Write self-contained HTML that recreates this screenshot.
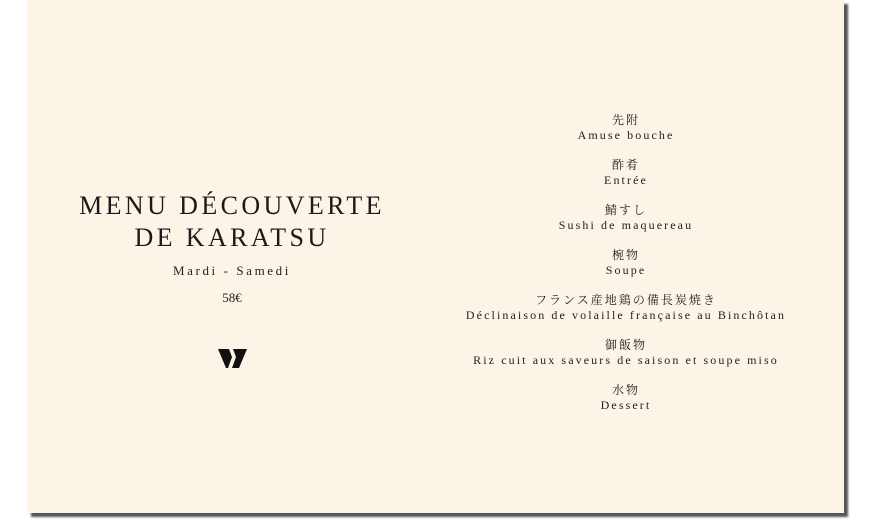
<!DOCTYPE html>
<html><head><meta charset="utf-8"><style>
html,body{margin:0;padding:0;background:#fff;width:880px;height:521px;overflow:hidden}
.card{position:absolute;left:27px;top:0;width:817px;height:513px;background:#fdf4e8;box-shadow:4px 4px 2px #555}
.f{font-family:"Liberation Serif","Noto Serif CJK SC",serif;color:#222;position:absolute;text-align:center;white-space:nowrap}
.t{left:0;width:410px;font-size:26px;letter-spacing:3.4px;line-height:32px;top:190px;color:#1a1a1a}
.s{left:0;width:410px;font-size:13px;letter-spacing:2.6px;top:263px}
.p{left:0;width:410px;font-size:13px;top:290px}
.r{left:400px;width:398px;top:113px;font-size:12px;letter-spacing:2.1px;line-height:15px}
.r div{margin-bottom:15px}
.r .j{font-size:12px;letter-spacing:2px}
</style></head><body>
<div class="card">
<div class="f t">MENU DÉCOUVERTE<br>DE KARATSU</div>
<div class="f s">Mardi - Samedi</div>
<div class="f p">58€</div>
<svg style="position:absolute;left:191px;top:349px" width="29" height="19" viewBox="0 0 29 19"><path d="M0 0H11L14 8 10 19H8Z" fill="#111"/><path d="M15 0H29L21 19H14L18 8Z" fill="#111"/></svg>
<div class="f r">
<div><span class="j">先附</span><br>Amuse bouche</div>
<div><span class="j">酢肴</span><br>Entrée</div>
<div><span class="j">鯖すし</span><br>Sushi de maquereau</div>
<div><span class="j">椀物</span><br>Soupe</div>
<div><span class="j">フランス産地鶏の備長炭焼き</span><br>Déclinaison de volaille française au Binchôtan</div>
<div><span class="j">御飯物</span><br>Riz cuit aux saveurs de saison et soupe miso</div>
<div><span class="j">水物</span><br>Dessert</div>
</div>
</div>
</body></html>
